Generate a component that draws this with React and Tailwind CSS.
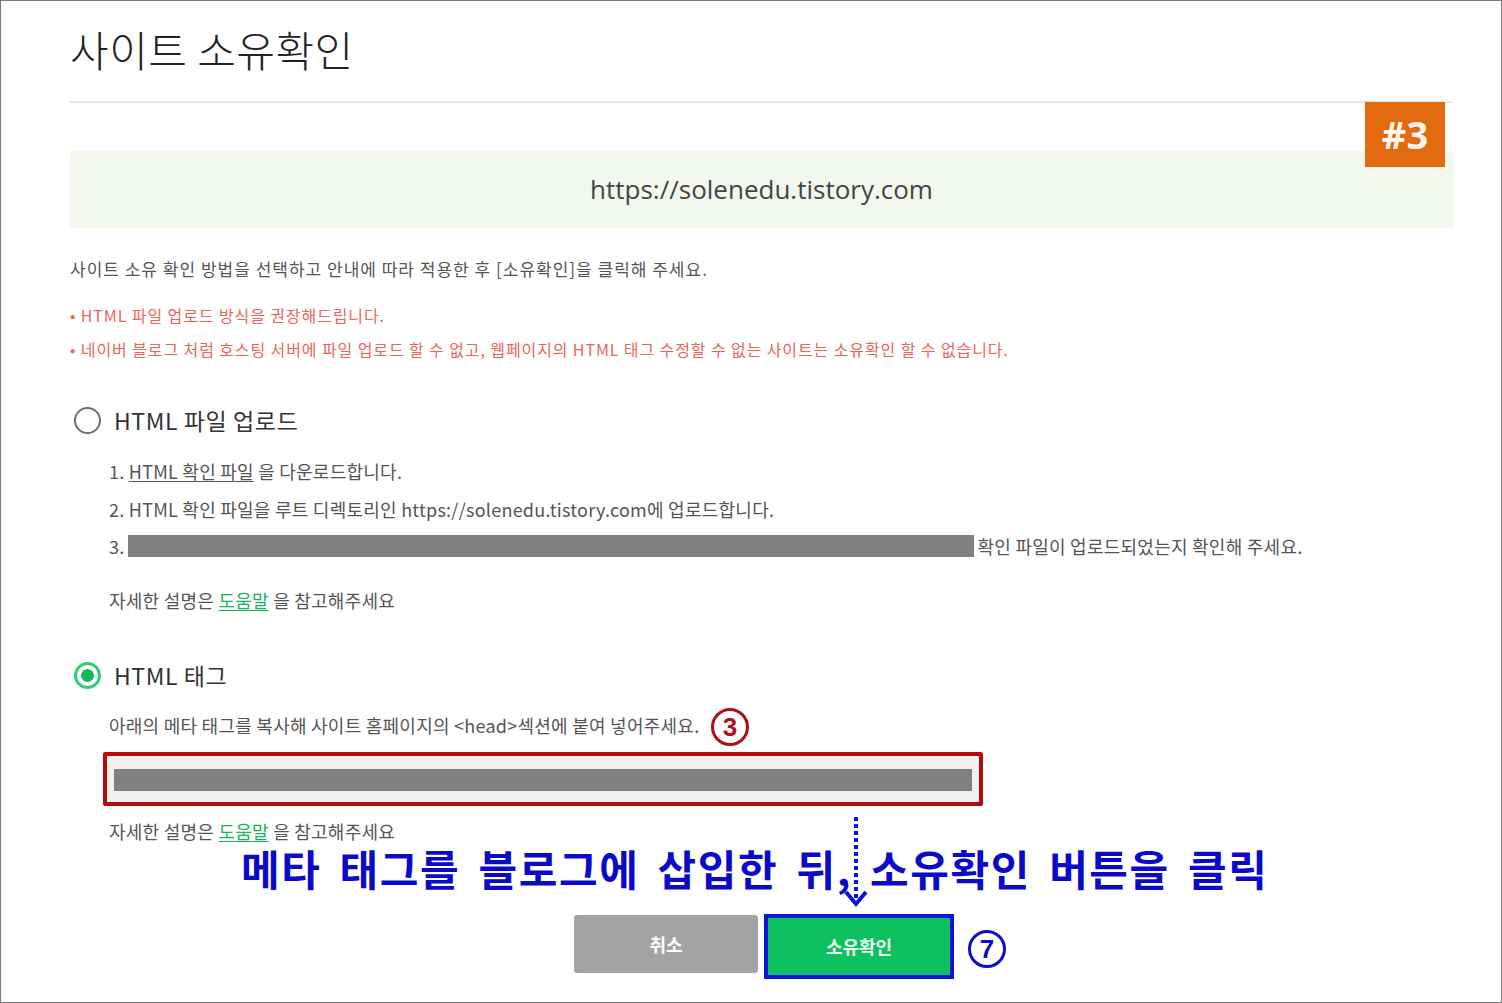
import React from "react";

const KR = { fontFamily: '"Noto Sans CJK KR", "Noto Sans", sans-serif' };

function Radio({ checked }) {
  if (checked) {
    return (
      <span className="flex h-[27px] w-[27px] items-center justify-center rounded-full border-[3px] border-[#2fcf76] bg-white">
        <span className="h-[13px] w-[13px] rounded-full bg-[#12b85a]" />
      </span>
    );
  }
  return <span className="block h-[27px] w-[27px] rounded-full border-2 border-[#6f6f6f] bg-white" />;
}

export default function App() {
  return (
    <div className="relative h-[1003px] w-[1502px] overflow-hidden border border-[#7a7a7a] bg-white text-[#555]" style={KR}>
      <div className="pl-[69px] pr-[48px]">
        {/* Title */}
        <h1 className="pt-[22px] text-[42px] font-light leading-[52px] tracking-[0.5px] text-[#222]">사이트 소유확인</h1>
        <div className="mt-[26px] h-[2px] bg-[#e6e6e6]" />

        {/* URL box */}
        <div className="mt-[48px] flex h-[77px] items-center justify-center bg-[#f3f8ed] text-[26px] text-[#444]" style={{ fontFamily: '"Open Sans", "Noto Sans", sans-serif' }}>
          https://solenedu.tistory.com
        </div>

        <p className="mt-[29px] text-[17px] leading-[24px] tracking-[1px] text-[#555]">
          사이트 소유 확인 방법을 선택하고 안내에 따라 적용한 후 [소유확인]을 클릭해 주세요.
        </p>
        <p className="mt-[22px] text-[16px] leading-[24px] tracking-[0.9px] text-[#e8665c]">
          • HTML 파일 업로드 방식을 권장해드립니다.
        </p>
        <p className="mt-[10px] text-[16px] leading-[24px] tracking-[0.9px] text-[#e8665c]">
          • 네이버 블로그 처럼 호스팅 서버에 파일 업로드 할 수 없고, 웹페이지의 HTML 태그 수정할 수 없는 사이트는 소유확인 할 수 없습니다.
        </p>

        {/* Option 1 */}
        <div className="mt-[44px] flex items-center gap-[13px] pl-[4px]">
          <Radio checked={false} />
          <span className="text-[23px] leading-[30px] tracking-[0.6px] text-[#333]">HTML 파일 업로드</span>
        </div>
        <div className="pl-[39px] text-[18px] leading-[26px] tracking-[0.25px] text-[#555]">
          <p className="mt-[23px]">
            1. <span className="underline underline-offset-2">HTML 확인 파일</span> 을 다운로드합니다.
          </p>
          <p className="mt-[12px]">2. HTML 확인 파일을 루트 디렉토리인 https://solenedu.tistory.com에 업로드합니다.</p>
          <p className="mt-[11px] flex items-center">
            <span>3.</span>
            <span className="ml-[3px] inline-block h-[22px] w-[846px] bg-[#808080]" />
            <span className="ml-[4px]">확인 파일이 업로드되었는지 확인해 주세요.</span>
          </p>
          <p className="mt-[28px]">
            자세한 설명은 <span className="text-[#19b35c] underline underline-offset-2">도움말</span> 을 참고해주세요
          </p>
        </div>

        {/* Option 2 */}
        <div className="mt-[47px] flex items-center gap-[13px] pl-[4px]">
          <Radio checked={true} />
          <span className="text-[23px] leading-[30px] tracking-[0.6px] text-[#333]">HTML 태그</span>
        </div>
        <div className="pl-[39px] text-[18px] leading-[26px] tracking-[0.25px] text-[#555]">
          <p className="mt-[22px]">아래의 메타 태그를 복사해 사이트 홈페이지의 &lt;head&gt;섹션에 붙여 넣어주세요.</p>
          <div className="ml-[-6px] mt-[14px] flex h-[54px] w-[880px] items-end rounded-[2px] border-4 border-[#b40a0a] bg-[#f1f1f1] px-[7px] pb-[11px]">
            <div className="h-[22px] w-full bg-[#808080]" />
          </div>
          <p className="mt-[12px]">
            자세한 설명은 <span className="text-[#19b35c] underline underline-offset-2">도움말</span> 을 참고해주세요
          </p>
        </div>

        {/* Buttons */}
        <div className="mt-[70px] flex items-start pl-[504px]">
          <button className="mt-[1px] flex h-[58px] w-[184px] items-center justify-center rounded-[3px] bg-[#a3a3a3] text-[18px] font-bold text-white">
            취소
          </button>
          <div className="ml-[6px] border-4 border-[#0a14d8] bg-white">
            <button className="flex h-[57px] w-[182px] items-center justify-center bg-[#0ec15f] text-[18px] font-bold text-[#e9f9ee]">
              소유확인
            </button>
          </div>
          <span className="ml-[14px] mt-[16px] flex h-[38px] w-[38px] items-center justify-center rounded-full border-[3px] border-[#0a10c8] text-[26px] font-bold leading-none text-[#0a10c8]" style={{ fontFamily: '"Liberation Sans", sans-serif' }}>
            7
          </span>
        </div>
      </div>

      {/* Badge #3 */}
      <div className="absolute left-[1364px] top-[101px] flex h-[65px] w-[80px] items-center justify-center bg-[#e26a0f] text-[38px] font-bold text-[#fff8ee]" style={{ fontFamily: '"Open Sans", sans-serif' }}>
        #3
      </div>

      {/* Circled 3 */}
      <span className="absolute left-[710px] top-[707px] flex h-[38px] w-[38px] items-center justify-center rounded-full border-[3px] border-[#b01018] text-[26px] font-bold leading-none text-[#b01018]" style={{ fontFamily: '"Liberation Sans", sans-serif' }}>
        3
      </span>

      {/* Blue annotation text */}
      <div className="absolute left-[240px] top-[846px] whitespace-nowrap text-[42px] font-bold leading-[42px] tracking-[1.6px] text-[#0a0ac8]" style={{ ...KR, wordSpacing: "7px" }}>
        메타 태그를 블로그에 삽입한 뒤, 소유확인 버튼을 클릭
      </div>

      {/* Dotted arrow */}
      <svg className="absolute left-[840px] top-[812px]" width="30" height="96" viewBox="0 0 30 96">
        <line x1="15" y1="4" x2="15" y2="88" stroke="#0a14d8" strokeWidth="4" strokeDasharray="4 3" />
        <polyline points="5,79 15,91 25,79" fill="none" stroke="#0a14d8" strokeWidth="4" />
      </svg>
    </div>
  );
}
